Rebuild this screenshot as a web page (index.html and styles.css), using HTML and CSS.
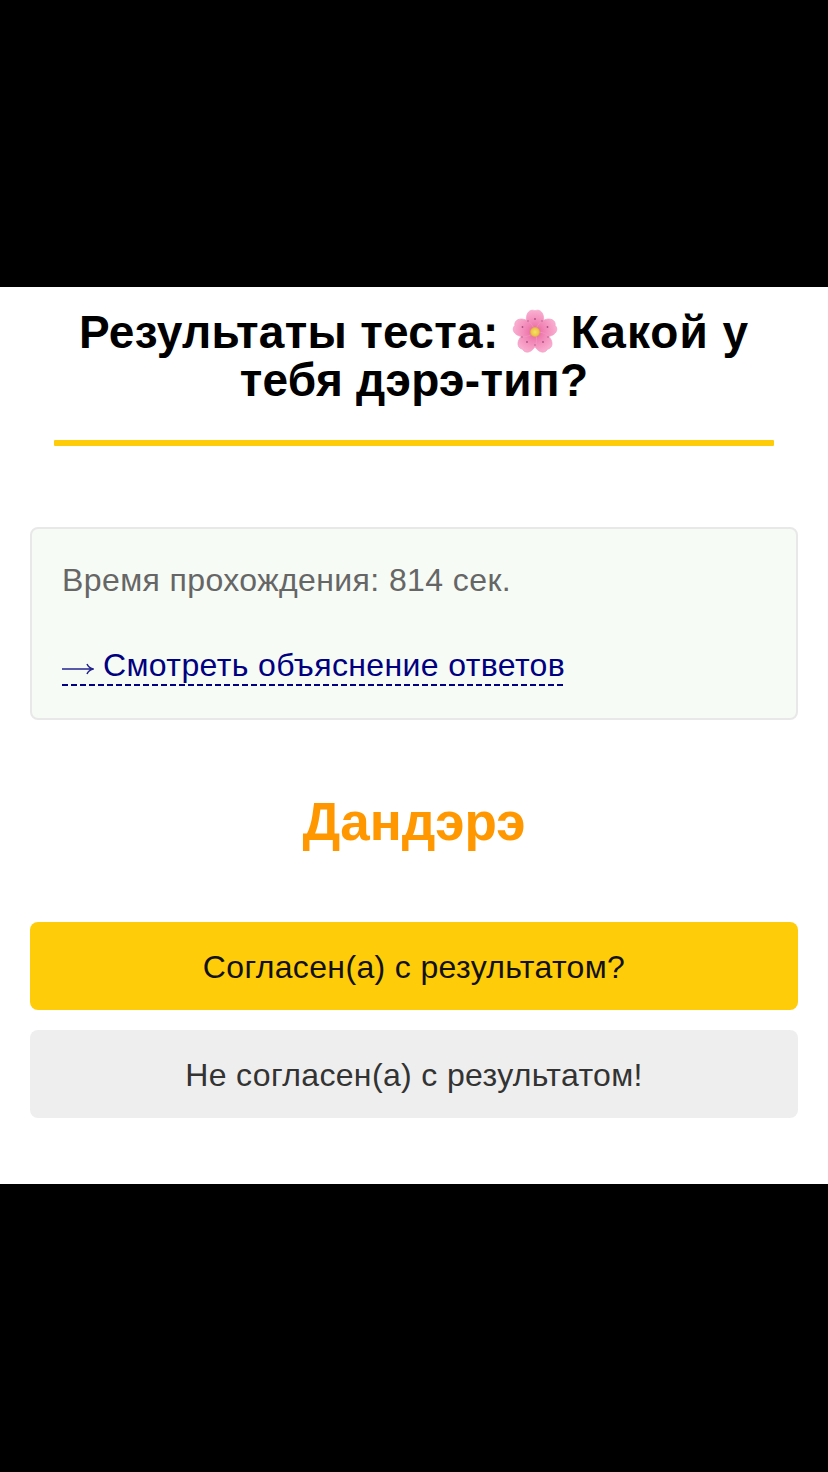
FILE: index.html
```html
<!DOCTYPE html>
<html lang="ru">
<head>
<meta charset="utf-8">
<title>Результаты теста</title>
<link rel="stylesheet" href="styles.css">
</head>
<body>
<main class="screen">
  <header class="head">
    <h1 class="title">Результаты теста: <svg class="flower" viewBox="0 0 50 50" aria-hidden="true">
      <defs>
        <radialGradient id="petal" gradientUnits="userSpaceOnUse" cx="25" cy="25" r="24">
          <stop offset="0" stop-color="#e4609c"/>
          <stop offset="0.4" stop-color="#f186b6"/>
          <stop offset="0.8" stop-color="#f8a6cb"/>
          <stop offset="1" stop-color="#fbb8d6"/>
        </radialGradient>
        <radialGradient id="bud" cx="50%" cy="50%" r="50%">
          <stop offset="0" stop-color="#f6e06a"/>
          <stop offset="0.7" stop-color="#edc948"/>
          <stop offset="1" stop-color="#dfa24a"/>
        </radialGradient>
        <path id="p" d="M25 25C19 21 15.500 16 16.500 9.500C17.500 4 21.500 2 25 3.800C28.500 2 32.500 4 33.500 9.500C34.500 16 31 21 25 25Z"/>
      </defs>
      <g fill="url(#petal)" stroke="#f39ac2" stroke-width=".6">
        <use href="#p"/>
        <use href="#p" transform="rotate(72 25 25)"/>
        <use href="#p" transform="rotate(144 25 25)"/>
        <use href="#p" transform="rotate(216 25 25)"/>
        <use href="#p" transform="rotate(288 25 25)"/>
      </g>
      <g fill="#a8507e">
        <circle cx="25" cy="12" r=".9"/><circle cx="37.500" cy="20" r=".9"/><circle cx="33" cy="35" r=".9"/>
        <circle cx="17" cy="35" r=".9"/><circle cx="12.500" cy="20" r=".9"/><circle cx="32" cy="14" r=".7"/>
        <circle cx="18" cy="14" r=".7"/><circle cx="38" cy="30" r=".7"/><circle cx="12" cy="30" r=".7"/><circle cx="25" cy="38" r=".7"/>
      </g>
      <circle cx="25" cy="25" r="5" fill="url(#bud)"/>
    </svg> <span class="wide">Какой у</span> тебя дэрэ-тип?</h1>
    <div class="rule"></div>
  </header>
  <section class="card">
    <p class="time">Время прохождения: 814 сек.</p>
    <a class="explain" href="#"><svg class="arrow" viewBox="0 0 32 14" aria-hidden="true"><path d="M0 7H31M25 2C26 4.500 28 6 31 7C28 8 26 9.500 25 12"/></svg>Смотреть объяснение ответов</a>
  </section>
  <h2 class="type">Дандэрэ</h2>
  <div class="actions">
    <button class="btn agree" type="button">Согласен(а) с результатом?</button>
    <button class="btn disagree" type="button">Не согласен(а) с результатом!</button>
  </div>
</main>
</body>
</html>
```
FILE: styles.css
```css
* { box-sizing: border-box; }
html, body { margin: 0; height: 100%; background: #000; }
body { padding-top: 287px; font-family: "Liberation Sans", Arial, sans-serif; }
.screen {
  height: 897px;
  background: #fff;
  padding: 20px 30px 0;
}
.head { padding: 0 24px; }
.title {
  margin: 0;
  font-size: 46px;
  line-height: 46px;
  font-weight: 700;
  letter-spacing: 0.3px;
  text-align: center;
  color: #000;
}
.wide { letter-spacing: 1px; }
.flower { width: 50px; height: 50px; margin: 0 -2px; vertical-align: -9px; }
.rule { height: 6px; margin-top: 37px; background: #ffcc09; border-radius: 1px; }
.card {
  margin-top: 81px;
  height: 193px;
  padding: 31px 30px 0;
  background: #f6fbf5;
  border: 2px solid #e8e8e8;
  border-radius: 8px;
}
.time { margin: 0; font-size: 32px; line-height: 40px; letter-spacing: 0.4px; color: #666; }
.explain {
  display: inline-block;
  margin-top: 47px;
  padding-bottom: 2px;
  font-size: 32px;
  line-height: 37px;
  letter-spacing: 0.38px;
  color: #000080;
  text-decoration: none;
  background: linear-gradient(90deg, #000080 6px, transparent 6px) left bottom / 9px 2px repeat-x;
}
.arrow {
  width: 32px;
  height: 14px;
  margin-right: 9px;
  fill: none;
  stroke: #24248f;
  stroke-width: 1.500;
}
.type {
  margin: 71px 0 0;
  font-size: 53px;
  line-height: 62px;
  font-weight: 700;
  text-align: center;
  color: #ff9800;
}
.actions { margin-top: 69px; display: flex; flex-direction: column; gap: 20px; }
.btn {
  height: 88px;
  padding: 2px 0 0;
  border: 0;
  border-radius: 8px;
  font: 400 32px "Liberation Sans", Arial, sans-serif;
  letter-spacing: 0.35px;
}
.agree { background: #ffcc09; color: #111; }
.disagree { background: #eee; color: #333; }
```
